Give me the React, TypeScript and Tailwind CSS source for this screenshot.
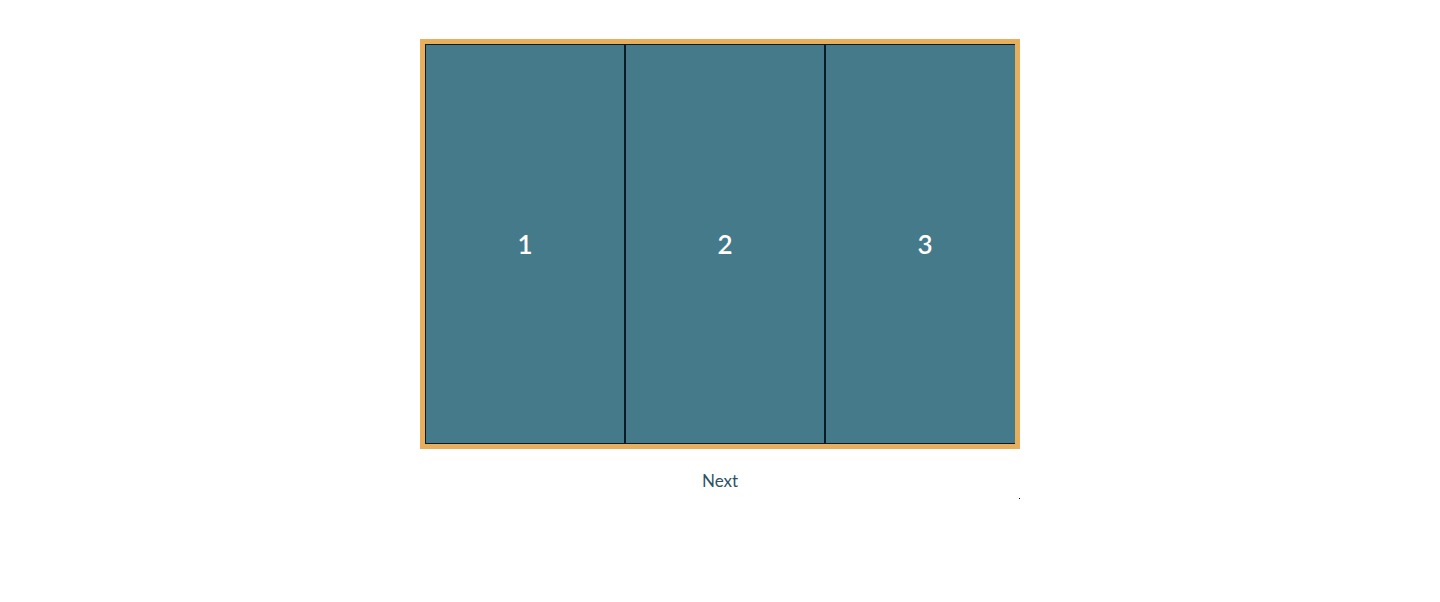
const slides = ['1', '2', '3']

export default function App() {
  return (
    <div className="min-h-[602px] bg-white pt-[39px] font-['Lato',sans-serif]">
      <div className="mx-auto w-[600px]">
        <div className="h-[410px] overflow-hidden border-[5px] border-[#e9ae5b]">
          <div className="flex">
            {slides.map((s) => (
              <div
                key={s}
                className="flex h-[400px] w-[200px] shrink-0 items-center justify-center border border-[#0b1b26] bg-[#457a8a] text-[26px] font-semibold text-white"
              >
                {s}
              </div>
            ))}
          </div>
        </div>
        <div className="relative flex justify-center pt-[21px]">
          <button className="text-[17px] leading-[22px] text-[#2d5263]">Next</button>
          <span className="absolute right-0 top-[49px] h-px w-px bg-black" />
        </div>
      </div>
    </div>
  )
}
